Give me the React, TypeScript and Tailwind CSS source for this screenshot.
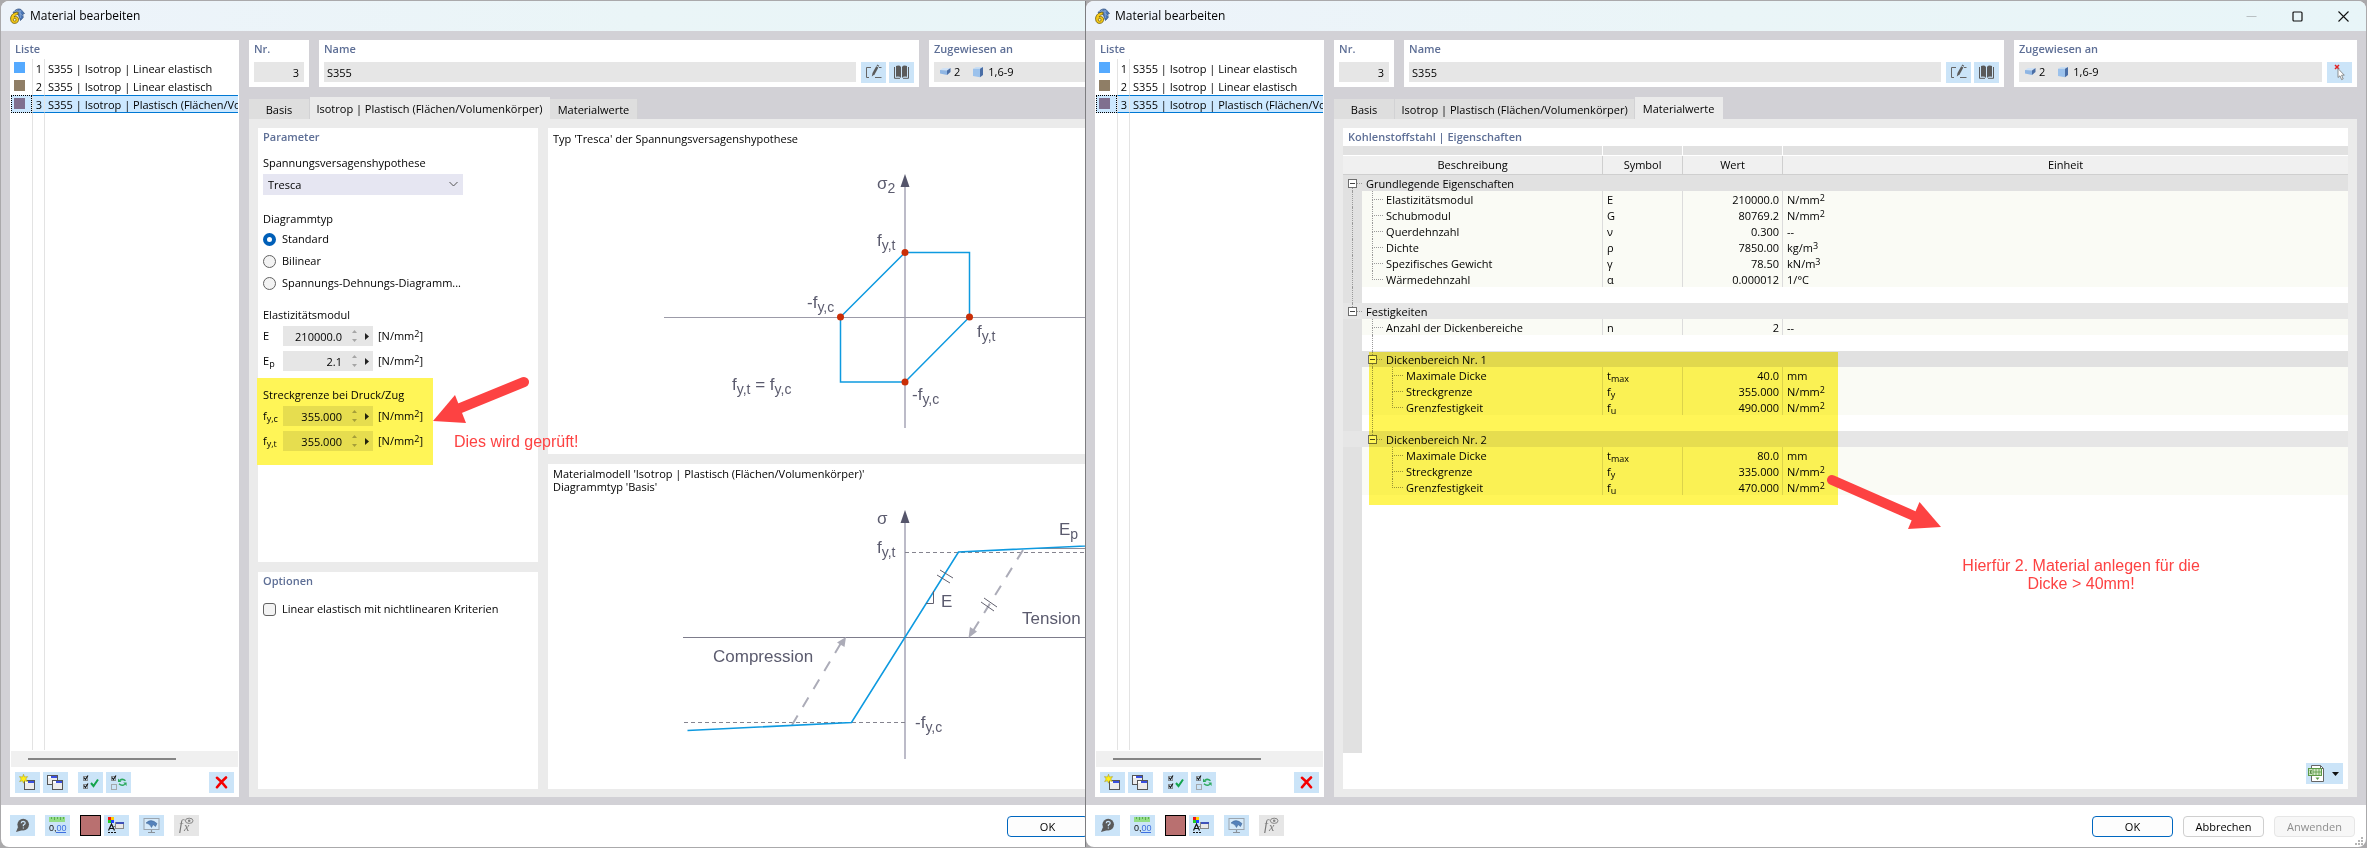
import { useId } from "react";
import type { ReactNode } from "react";

type Tab = "basis" | "model" | "values";

/* ---------- icons ---------- */

function AppIcon() {
  return (
    <svg className="size-4 shrink-0" viewBox="0 0 16 16" aria-hidden="true">
      <path d="M4 4.5Q8 -.5 12 1.5L15.5 5.5L13.8 6L14.2 9.5L11.5 12.5L9 6Z" fill="#4a76b8" stroke="#2f4d7d" strokeWidth=".7" />
      <path d="M5 3.5L12.5 3M7 2L14 8M11 2L11.4 10" stroke="#a9c3e6" strokeWidth=".5" />
      <path d="M7.6 4.2C3.5 5 1.4 8 1.6 11.2C1.8 14.5 4 15.6 5.8 15.4C8.7 15.2 10 13 9.6 10.8C9.2 8.6 6.8 8 5.2 9C5.6 7.6 6.8 6.8 8.8 6.6L9.2 4.2Z" fill="#f6c915" stroke="#6b5a12" strokeWidth=".8" />
      <circle cx="5.7" cy="11.8" r="1.4" fill="#fff3b0" stroke="#6b5a12" strokeWidth=".7" />
    </svg>
  );
}

function EditIcon() {
  return (
    <svg className="h-[17px] w-[19px]" viewBox="0 0 19 17" fill="none" aria-hidden="true">
      <path d="M7 3.5H2.5V13.5H5M11 13.5H17.5M15 3.5H17.5" stroke="#666" />
      <path d="M8.5 9L12.2 2.2L14.4 3.4L10.7 10.2L7.8 12.6Z" fill="#5a5a5a" />
      <path d="M12.6 1.4L13.2 .6L15.2 1.8L14.8 2.7Z" fill="#5a5a5a" />
    </svg>
  );
}

function BookIcon() {
  return (
    <svg className="h-[17px] w-[19px]" viewBox="0 0 19 17" aria-hidden="true">
      <path d="M4 2Q7.5 .8 9 3V14Q7.5 12 4 12.8Z" fill="#5a5a5a" />
      <path d="M15 2Q11.5 .8 10 3V14Q11.5 12 15 12.8Z" fill="#5a5a5a" />
      <path d="M2.5 3V14.3H8M16.5 3V14.3H11" fill="none" stroke="#5a5a5a" />
    </svg>
  );
}

function SurfaceIcon() {
  return (
    <svg className="h-3 w-3" viewBox="0 0 12 12" aria-hidden="true">
      <path d="M1 4L4 2H11.5L8 4.5Z" fill="#d0e2f6" />
      <path d="M1 4L8 4.5V9L1 7.6Z" fill="#8fb6e4" />
      <path d="M8 4.5L11.5 2V6L8 9Z" fill="#4a6ea6" />
    </svg>
  );
}

function SolidIcon() {
  return (
    <svg className="h-3 w-3" viewBox="0 0 12 12" aria-hidden="true">
      <path d="M1 2.8L4 1H11L8 2.8Z" fill="#c8def5" />
      <path d="M1 2.8H8V11.2L1 10Z" fill="#9cc2ec" />
      <path d="M8 2.8L11 1V9L8 11.2Z" fill="#4a6ea6" />
    </svg>
  );
}

function PickIcon() {
  return (
    <svg className="h-[17px] w-[19px]" viewBox="0 0 19 17" aria-hidden="true">
      <path d="M5 1L9 5M9 1L5 5" stroke="#e32222" strokeWidth="1.5" />
      <path d="M8 4.5V13.5L10 11.8L11.6 15.6L13.2 14.9L11.6 11.2H14.3Z" fill="#fff" stroke="#777" strokeWidth=".8" />
    </svg>
  );
}

function WindowShape({ x, y }: { x: number; y: number }) {
  return (
    <g>
      <rect x={x + 0.5} y={y + 0.5} width="10" height="9" fill="#ececec" stroke="#555" />
      <rect x={x + 1} y={y + 1} width="9" height="2" fill="#fff" />
      <rect x={x + 4} y={y + 1} width="6" height="2" fill="#3a50e0" />
    </g>
  );
}

function NewIcon() {
  return (
    <svg className="h-[17px] w-[17px]" viewBox="0 0 17 17" aria-hidden="true">
      <WindowShape x={5} y={6} />
      <path d="M4.5 .2L5.5 3L8.6 2.6L6.8 5L8.4 7.6L5.5 6.8L4.5 9.2L3.6 6.8L.6 7.6L2.2 5L.4 2.6L3.6 3Z" fill="#ffee1a" stroke="#a39612" strokeWidth=".5" />
    </svg>
  );
}

function CopyIcon() {
  return (
    <svg className="h-[17px] w-[17px]" viewBox="0 0 17 17" aria-hidden="true">
      <WindowShape x={0} y={1} />
      <WindowShape x={5} y={6} />
    </svg>
  );
}

function SelectAllIcon() {
  return (
    <svg className="h-[17px] w-[19px]" viewBox="0 0 19 17" fill="none" aria-hidden="true">
      <rect x="2.5" y="2.5" width="4" height="4" stroke="#8a8f94" />
      <rect x="2.5" y="10.5" width="4" height="4" stroke="#8a8f94" />
      <path d="M3 3.5L4.4 5.5L7 1.5M3 11.5L4.4 13.5L7 9.5" stroke="#111" strokeWidth="1.1" />
      <path d="M10 9L12.5 12L17 5.5" stroke="#14a44d" strokeWidth="2" />
    </svg>
  );
}

function InvertIcon() {
  return (
    <svg className="h-[17px] w-[19px]" viewBox="0 0 19 17" fill="none" aria-hidden="true">
      <rect x="2.5" y="2.5" width="4" height="4" stroke="#8a8f94" />
      <rect x="2.5" y="10.5" width="5" height="5" stroke="#a3a8ad" />
      <path d="M3 3.5L4.4 5.5L7 1.5" stroke="#111" strokeWidth="1.1" />
      <path d="M16.5 6.8Q13.5 4.2 10.8 6.4M10 9.8Q13 12.6 15.8 10.2" stroke="#2ba85c" strokeWidth="1.5" />
      <path d="M9 4.6V8H12.4ZM17.6 12V8.6H14.2Z" fill="#2ba85c" />
    </svg>
  );
}

function DeleteIcon() {
  return (
    <svg className="h-[13px] w-[13px]" viewBox="0 0 13 13" aria-hidden="true">
      <path d="M2 1.8Q6 5 11 11.2M11 1.5Q6 6 2 11.2" stroke="#f50000" strokeWidth="2.6" strokeLinecap="round" fill="none" />
    </svg>
  );
}

function HelpIcon() {
  return (
    <svg className="h-[15px] w-[15px]" viewBox="0 0 15 15" aria-hidden="true">
      <circle cx="8.2" cy="6.6" r="5.8" fill="#5a5a5a" />
      <path d="M3 9L1 14L8 12Z" fill="#5a5a5a" />
      <path d="M6.2 5.2Q6.4 3.3 8.3 3.3Q10.2 3.4 10.2 5Q10.1 6.2 8.4 7V8.2M8.4 9.4V10.6" fill="none" stroke="#cbe4f8" strokeWidth="1.3" />
    </svg>
  );
}

function UnitsIcon() {
  return (
    <svg className="h-[17px] w-[19px]" viewBox="0 0 19 17" aria-hidden="true">
      <rect x="1" y="0" width="16" height="5" fill="#93dd86" />
      <path d="M3.5 0V2M6.5 0V3M9.5 0V2M12.5 0V3M15.5 0V2" stroke="#4c9e45" strokeWidth=".8" />
      <text x="1" y="13.5" fontSize="9" fontFamily="Liberation Sans, sans-serif" fill="#111">
        0,<tspan fill="#3d6fe0">00</tspan>
      </text>
      <path d="M8 15.5H18" stroke="#3d6fe0" />
    </svg>
  );
}

function DisplayIcon() {
  return (
    <svg className="h-[17px] w-[19px]" viewBox="0 0 19 17" aria-hidden="true">
      <rect x="1" y="0" width="3" height="3" fill="#e11" />
      <rect x="4" y="0" width="3" height="3" fill="#fc0" />
      <rect x="1" y="3" width="3" height="3" fill="#2c2" />
      <rect x="4" y="3" width="3" height="3" fill="#24f" />
      <path d="M1.5 13.5L4.5 7L7.5 13.5M2.5 11.5H6.5" stroke="#111" strokeWidth="1.2" fill="none" />
      <path d="M1 15.5H3M4 15.5H6M7 15.5H9" stroke="#111" />
      <rect x="8.5" y="5.5" width="8" height="6" fill="#e8e8e8" stroke="#888" />
      <rect x="9" y="5" width="8" height="2" fill="#3f51b8" />
      <path d="M6 9.5H8" stroke="#777" />
    </svg>
  );
}

function ViewIcon() {
  return (
    <svg className="h-[17px] w-[17px]" viewBox="0 0 17 17" aria-hidden="true">
      <rect x="1" y="1.5" width="15" height="11" fill="#d6eafa" stroke="#9aa4ae" />
      <path d="M3 6Q8 1 14 6.5L12.5 9.5L10 7.5L8.5 10.5Q7 6.5 3 6Z" fill="#5582bb" stroke="#3b608f" strokeWidth=".5" />
      <path d="M8.5 13V15M5 15.5H12" stroke="#8a929a" strokeWidth="1.2" />
    </svg>
  );
}

function FormulaIcon() {
  return (
    <svg className="h-[17px] w-[17px]" viewBox="0 0 17 17" aria-hidden="true">
      <text x="1" y="13" fontSize="14" fontStyle="italic" fontFamily="Liberation Serif, serif" fill="#777">
        f<tspan dx="1" dy="1" fontSize="12">x</tspan>
      </text>
      <ellipse cx="11.2" cy="3.8" rx="3.8" ry="2.6" fill="none" stroke="#858585" />
      <circle cx="11.2" cy="3.8" r="1.3" fill="#858585" />
    </svg>
  );
}

function ExportIcon() {
  return (
    <svg className="h-[17px] w-4" viewBox="0 0 16 17" fill="none" aria-hidden="true">
      <path d="M3.5 .5H12.5L15.5 3.5V16.5H3.5Z" fill="#fff" stroke="#666" />
      <path d="M12.5 .5V3.5H15.5" stroke="#666" />
      <rect x=".5" y="3.5" width="13" height="7" fill="#cfe6c4" stroke="#5c9a46" />
      <path d="M5 4V10M8 4V10M11 4V10M5 7H13" stroke="#5c9a46" strokeWidth=".8" />
      <path d="M2 5L3.5 9M3.5 5L2 9" stroke="#3d7a2a" strokeWidth=".8" />
      <path d="M7.5 12.5H11.5L9.5 15Z" fill="#5c9a46" />
    </svg>
  );
}

/* ---------- shared parts ---------- */

function Heading({ children }: { children: ReactNode }) {
  return <h2 className="h-[18px] px-[5px] font-semibold leading-[18px] text-[#5e6f96]">{children}</h2>;
}

function Sub({ children }: { children: ReactNode }) {
  return <sub className="bottom-[-2px] text-[9px]">{children}</sub>;
}

function Sup({ children }: { children: ReactNode }) {
  return <sup className="top-[-3px] text-[9px]">{children}</sup>;
}

function ToolButton({ label, children, muted }: { label: string; children: ReactNode; muted?: boolean }) {
  return (
    <button
      type="button"
      aria-label={label}
      className={`flex h-[21px] w-[25px] shrink-0 items-center justify-center ${muted ? "bg-[#e6e6e6]" : "bg-[#cbe4f8]"}`}
    >
      {children}
    </button>
  );
}

const MATERIALS = [
  { no: 1, name: "S355 | Isotrop | Linear elastisch", color: "bg-[#55aaff]" },
  { no: 2, name: "S355 | Isotrop | Linear elastisch", color: "bg-[#8f7e66]" },
  { no: 3, name: "S355 | Isotrop | Plastisch (Flächen/Volumenkörper)", color: "bg-[#80708f]" },
];

function MaterialList() {
  return (
    <aside className="flex w-[229px] shrink-0 flex-col bg-white p-px pt-0">
      <div className="-ml-px">
        <Heading>Liste</Heading>
      </div>
      <ul className="mt-px">
        {MATERIALS.map((m) => {
          const active = m.no === 3;
          return (
            <li key={m.no}>
              <button
                type="button"
                className={`flex h-[18px] w-full overflow-hidden text-left ${active ? "bg-[#cce8ff]" : ""}`}
              >
                <span className={`h-full w-[21px] shrink-0 ${active ? "border border-dotted border-black pl-[2px] pt-[2px]" : "pl-[3px] pt-[3px]"}`}>
                  <span className={`block size-[11px] ${m.color}`} />
                </span>
                <span className={`h-full w-3 shrink-0 border-l border-[#e3e3e3] pr-[2px] text-right ${active ? "border-y border-y-[#0078d4] leading-[18px]" : "leading-5"}`}>
                  {m.no}
                </span>
                <span className={`h-full min-w-0 flex-1 overflow-hidden whitespace-nowrap border-l border-[#e3e3e3] pl-[3px] ${active ? "border-y border-y-[#0078d4] leading-[18px]" : "leading-5"}`}>
                  {m.name}
                </span>
              </button>
            </li>
          );
        })}
      </ul>
      <div className="flex flex-1 pl-[21px]">
        <div className="w-[13px] border-x border-[#e3e3e3]" />
      </div>
      <div className="mt-px h-4 bg-[#f0f0f0] pl-[17px] pt-[7px]">
        <div className="h-[2px] w-[148px] bg-[#858585]" />
      </div>
      <div className="flex gap-[3px] px-1 pb-[3px] pt-[5px]">
        <ToolButton label="Neu"><NewIcon /></ToolButton>
        <ToolButton label="Kopieren"><CopyIcon /></ToolButton>
        <span className="w-1" />
        <ToolButton label="Alle auswählen"><SelectAllIcon /></ToolButton>
        <ToolButton label="Auswahl umkehren"><InvertIcon /></ToolButton>
        <span className="flex-1" />
        <ToolButton label="Löschen"><DeleteIcon /></ToolButton>
      </div>
    </aside>
  );
}

function HeaderFields() {
  const id = useId();
  return (
    <div className="flex h-[47px] gap-[10px]">
      <section className="w-[60px] bg-white">
        <Heading><label htmlFor={id + "nr"}>Nr.</label></Heading>
        <div className="px-[5px] pt-1">
          <input id={id + "nr"} readOnly value="3" className="block h-5 w-full bg-[#e6e6e6] px-[5px] pt-px text-right outline-none" />
        </div>
      </section>
      <section className="min-w-0 flex-1 bg-white">
        <Heading><label htmlFor={id + "name"}>Name</label></Heading>
        <div className="flex gap-[3px] px-[5px] pt-1">
          <input id={id + "name"} readOnly value="S355" className="mr-[2px] block h-5 min-w-0 flex-1 bg-[#e6e6e6] px-[3px] pt-px outline-none" />
          <ToolButton label="Name bearbeiten"><EditIcon /></ToolButton>
          <ToolButton label="Bibliothek"><BookIcon /></ToolButton>
        </div>
      </section>
      <section className="w-[343px] bg-white">
        <Heading>Zugewiesen an</Heading>
        <div className="flex gap-[5px] px-[5px] pt-1">
          <div className="flex h-5 flex-1 items-center bg-[#e6e6e6] pl-[5px]">
            <SurfaceIcon />
            <span className="ml-[3px] pt-px">2</span>
            <span className="ml-3"><SolidIcon /></span>
            <span className="ml-1 pt-px">1,6-9</span>
          </div>
          <ToolButton label="Zuweisen"><PickIcon /></ToolButton>
        </div>
      </section>
    </div>
  );
}

const TABS: { id: Tab; title: string; width: string }[] = [
  { id: "basis", title: "Basis", width: "w-[61px]" },
  { id: "model", title: "Isotrop | Plastisch (Flächen/Volumenkörper)", width: "w-[240px]" },
  { id: "values", title: "Materialwerte", width: "w-[88px]" },
];

function Dialog({ tab, children }: { tab: Tab; children: ReactNode }) {
  return (
    <section className="flex min-h-full flex-1 flex-col overflow-hidden rounded-lg bg-white">
      <header className="flex h-[30px] items-center bg-gradient-to-r from-[#edf3fa] via-[#eaf5f7] to-[#e8f5f8] pl-2">
        <AppIcon />
        <h1 className="ml-[5px] text-xs">Material bearbeiten</h1>
        <div className="ml-auto flex h-full items-center">
          <button type="button" aria-label="Minimieren" className="flex h-full w-[46px] items-center justify-center">
            <svg className="h-[11px] w-[11px]" viewBox="0 0 11 11"><path d="M.5 5.5H10.5" stroke="#b9c0c3" /></svg>
          </button>
          <button type="button" aria-label="Maximieren" className="flex h-full w-[46px] items-center justify-center">
            <svg className="h-[11px] w-[11px]" viewBox="0 0 11 11"><rect x="1" y="1" width="9" height="9" rx="1" fill="none" stroke="#111" strokeWidth="1.2" /></svg>
          </button>
          <button type="button" aria-label="Schließen" className="flex h-full w-[46px] items-center justify-center">
            <svg className="h-[11px] w-[11px]" viewBox="0 0 11 11"><path d="M.5 .5L10.5 10.5M10.5 .5L.5 10.5" stroke="#111" strokeWidth="1.1" /></svg>
          </button>
        </div>
      </header>

      <main className="flex flex-1 gap-[10px] bg-[#d2d1d6] px-[9px] pb-2 pt-[9px]">
        <MaterialList />
        <div className="flex min-w-0 flex-1 flex-col">
          <HeaderFields />
          <div role="tablist" className="flex h-8 items-end">
            {TABS.map((t) => (
              <button
                key={t.id}
                type="button"
                role="tab"
                aria-selected={t.id === tab}
                className={`${t.width} whitespace-nowrap border-r pt-[2px] text-center ${
                  t.id === tab ? "h-[22px] border-[#ebebeb] bg-[#ebebeb]" : "h-5 border-[#d2d2d4] bg-[#dedede]"
                }`}
              >
                {t.title}
              </button>
            ))}
          </div>
          <div className="flex flex-1 bg-[#ebebeb] px-[9px] pb-2 pt-[9px]">{children}</div>
        </div>
      </main>

      <footer className="flex h-[42px] items-start pl-[9px] pr-[10px] pt-[10px]">
        <ToolButton label="Hilfe"><HelpIcon /></ToolButton>
        <span className="w-[10px]" />
        <ToolButton label="Einheiten"><UnitsIcon /></ToolButton>
        <span className="w-[10px]" />
        <button type="button" aria-label="Farbe" className="mr-[3px] h-[21px] w-[21px] border border-black bg-[#b97070]" />
        <ToolButton label="Darstellung"><DisplayIcon /></ToolButton>
        <span className="w-[10px]" />
        <ToolButton label="Ansicht"><ViewIcon /></ToolButton>
        <span className="w-[10px]" />
        <ToolButton label="Formel" muted><FormulaIcon /></ToolButton>
        <div className="ml-auto flex gap-[10px] pt-px">
          <button type="button" className="h-[21px] w-[81px] rounded border border-[#0067c0] bg-[#fdfdfd] pt-px">OK</button>
          <button type="button" className="h-[21px] w-[81px] rounded border border-[#cfcfcf] bg-[#fdfdfd] pt-px">Abbrechen</button>
          <button type="button" disabled className="h-[21px] w-[81px] rounded border border-[#e6e6e6] bg-[#f7f7f7] pt-px text-[#8e8e8e]">Anwenden</button>
        </div>
        <svg className="-mr-[7px] mt-[22px] h-2 w-2 self-start" viewBox="0 0 8 8" fill="#b5b5b5" aria-hidden="true">
          <path d="M6 0H8V2H6ZM3 3H5V5H3ZM6 3H8V5H6ZM0 6H2V8H0ZM3 6H5V8H3ZM6 6H8V8H6Z" />
        </svg>
      </footer>
    </section>
  );
}

/* ---------- material model tab ---------- */

function QuantityField({ symbol, sub, value }: { symbol: string; sub?: string; value: string }) {
  const id = useId();
  return (
    <div className="flex h-5 items-center">
      <label htmlFor={id} className="w-5 shrink-0 leading-5">
        {symbol}
        {sub && <Sub>{sub}</Sub>}
      </label>
      <div className="flex h-full w-[90px] items-center bg-[#e6e6e6]">
        <input id={id} defaultValue={value} className="h-full w-[60px] bg-transparent pr-px pt-px text-right outline-none" />
        <svg className="h-5 w-[30px]" viewBox="0 0 30 20" aria-hidden="true">
          <path d="M9 7L11.5 4L14 7ZM9 13L11.5 16L14 13Z" fill="#a5a5a5" />
          <path d="M22 7L26 10.5L22 14Z" fill="#222" />
        </svg>
      </div>
      <span className="ml-[5px] leading-5">
        [N/mm<Sup>2</Sup>]
      </span>
    </div>
  );
}

function Parameters() {
  const id = useId();
  const types = ["Standard", "Bilinear", "Spannungs-Dehnungs-Diagramm..."];
  return (
    <section className="relative z-10 flex-1 bg-white">
      <Heading>Parameter</Heading>
      <div className="px-[5px] pt-[9px]">
        <label htmlFor={id + "hyp"} className="block h-4 leading-4">Spannungsversagenshypothese</label>
        <div className="relative mt-[3px] w-[200px]">
          <select id={id + "hyp"} className="block h-[21px] w-full appearance-none bg-[#e6e6f2] pl-[5px] pt-px outline-none">
            <option>Tresca</option>
          </select>
          <svg className="pointer-events-none absolute right-[5px] top-[7px] h-[7px] w-[9px]" viewBox="0 0 9 7">
            <path d="M.5 1L4.5 5L8.5 1" fill="none" stroke="#555" />
          </svg>
        </div>

        <fieldset className="mt-4">
          <legend className="h-4 leading-4">Diagrammtyp</legend>
          <div className="pt-px">
            {types.map((t, i) => (
              <label key={t} className="flex h-[22px] items-center gap-[6px]">
                <input
                  type="radio"
                  name={id + "type"}
                  defaultChecked={i === 0}
                  className="size-[13px] appearance-none rounded-full border border-[#626262] bg-[#f3f3f3] checked:border-4 checked:border-[#005fb8] checked:bg-white"
                />
                {t}
              </label>
            ))}
          </div>
        </fieldset>

        <h3 className="mt-[13px] h-4 leading-4">Elastizitätsmodul</h3>
        <div className="mt-[3px] flex flex-col gap-[5px]">
          <QuantityField symbol="E" value="210000.0" />
          <QuantityField symbol="E" sub="p" value="2.1" />
        </div>

        <div className="relative mt-4">
          <h3 className="h-4 leading-4">Streckgrenze bei Druck/Zug</h3>
          <div className="mt-[3px] flex flex-col gap-[5px]">
            <QuantityField symbol="f" sub="y,c" value="355.000" />
            <QuantityField symbol="f" sub="y,t" value="355.000" />
          </div>
          <div className="pointer-events-none absolute -bottom-[14px] -left-[6px] -top-[9px] w-[176px] bg-[#fff557] mix-blend-multiply" />
          <svg className="pointer-events-none absolute -top-3 left-[170px] h-[50px] w-[97px]" viewBox="433 375 97 50" aria-hidden="true">
            <path d="M524 382L458 409" stroke="#fd4242" strokeWidth="10" strokeLinecap="round" />
            <path d="M433 421L455 395L466 423Z" fill="#fd4242" />
          </svg>
          <p className="pointer-events-none absolute left-[191px] top-[46px] whitespace-nowrap font-['Liberation_Sans',sans-serif] text-base leading-[18px] text-[#fd4242]">
            Dies wird geprüft!
          </p>
        </div>
      </div>
    </section>
  );
}

function Label({ x, y, t, sub }: { x: number; y: number; t: string; sub?: string }) {
  return (
    <text x={x} y={y} fontSize="17" fill="#5b5b6e" fontFamily="Liberation Sans, Arial, sans-serif">
      {t}
      {sub && <tspan dy="4" fontSize="14">{sub}</tspan>}
    </text>
  );
}

function TrescaDiagram() {
  const points: [number, number][] = [[905, 252.5], [969.5, 317], [905, 382], [840.5, 317]];
  return (
    <svg className="mx-auto block h-[280px] w-[483px]" viewBox="664 155 483 280" role="img" aria-label="Tresca-Fließfläche">
      <path d="M905 185V428" stroke="#bcbbc8" strokeWidth="2" />
      <path d="M664 317.5H1147" stroke="#9c9ba8" />
      <path d="M905 174L909.5 187H900.5Z" fill="#55556b" />
      <path d="M905 252.5H969.5V317L905 382H840.5V317Z" fill="none" stroke="#0e9ae0" strokeWidth="1.5" />
      {points.map(([x, y]) => <circle key={`${x}-${y}`} cx={x} cy={y} r="3.5" fill="#cb2e06" />)}
      <Label x={877} y={189} t="σ" sub="2" />
      <Label x={877} y={246} t="f" sub="y,t" />
      <Label x={807} y={308} t="-f" sub="y,c" />
      <Label x={977} y={337} t="f" sub="y,t" />
      <Label x={912} y={400} t="-f" sub="y,c" />
      <text x="732" y="390" fontSize="17" fill="#5b5b6e" fontFamily="Liberation Sans, Arial, sans-serif">
        f<tspan dy="4" fontSize="14">y,t</tspan>
        <tspan dy="-4"> = f</tspan>
        <tspan dy="4" fontSize="14">y,c</tspan>
      </text>
    </svg>
  );
}

function StressStrainDiagram() {
  return (
    <svg className="mx-auto block h-[270px] w-[483px]" viewBox="664 500 483 270" role="img" aria-label="Spannungs-Dehnungs-Diagramm">
      <path d="M905 520V759" stroke="#bcbbc8" strokeWidth="2" />
      <path d="M683 637.5H1127" stroke="#7d7c8b" />
      <path d="M905 510L909.5 523H900.5Z" fill="#55556b" />
      <path d="M905 552.5H1127M905 722.5H683" stroke="#85848f" strokeDasharray="4 3" />
      <path d="M1030 548.5H1127" stroke="#8d8c99" />
      <path d="M792 725L841 643M1023 550L973 631" stroke="#acacb8" strokeWidth="2" strokeDasharray="11 10" />
      <path d="M846 637L844.5 647L837 642.5ZM968.5 638L970 627L977 631.5Z" fill="#acacb8" />
      <path d="M687.5 730.5L851.5 722.5L958.5 552L1127 544" fill="none" stroke="#0e9ae0" strokeWidth="1.6" />
      <path d="M926 603.5H933.5V591M937 575L950 583M940 570L953 578M981 602L994 611M984 598L997 607" fill="none" stroke="#62616f" />
      <Label x={877} y={524} t="σ" />
      <Label x={877} y={553} t="f" sub="y,t" />
      <Label x={1059} y={535} t="E" sub="p" />
      <Label x={941} y={607} t="E" />
      <Label x={1022} y={624} t="Tension" />
      <Label x={713} y={662} t="Compression" />
      <Label x={915} y={728} t="-f" sub="y,c" />
    </svg>
  );
}

function ModelTab() {
  return (
    <div className="flex flex-1 gap-[10px]">
      <div className="flex w-[280px] shrink-0 flex-col gap-[10px]">
        <Parameters />
        <section className="h-[217px] bg-white">
          <Heading>Optionen</Heading>
          <label className="mt-[11px] flex h-4 items-center gap-[6px] px-[5px]">
            <input type="checkbox" className="size-[13px] appearance-none rounded-[3px] border border-[#626262] bg-[#f3f3f3]" />
            Linear elastisch mit nichtlinearen Kriterien
          </label>
        </section>
      </div>
      <div className="flex min-w-0 flex-1 flex-col gap-[10px]">
        <section className="flex-1 bg-white">
          <h3 className="h-[27px] px-[5px] pt-[3px] leading-[15px]">Typ 'Tresca' der Spannungsversagenshypothese</h3>
          <TrescaDiagram />
        </section>
        <section className="flex-1 bg-white">
          <h3 className="h-9 px-[5px] pt-[3px] leading-[13px]">
            Materialmodell 'Isotrop | Plastisch (Flächen/Volumenkörper)'
            <br />
            Diagrammtyp 'Basis'
          </h3>
          <StressStrainDiagram />
        </section>
      </div>
    </div>
  );
}

/* ---------- material values tab ---------- */

type Row =
  | { kind: "group"; level: 0 | 1; title: string; shade: string; joinAbove?: boolean; joinBelow?: boolean }
  | { kind: "item"; level: 0 | 1; title: string; sym: string; sub?: string; value: string; unit: string; exp?: string; last?: boolean; root?: boolean; branch?: boolean }
  | { kind: "blank"; root?: boolean; branch?: boolean };

const ROWS: Row[] = [
  { kind: "group", level: 0, title: "Grundlegende Eigenschaften", shade: "bg-[#e1e1e1]", joinBelow: true },
  { kind: "item", level: 0, title: "Elastizitätsmodul", sym: "E", value: "210000.0", unit: "N/mm", exp: "2", root: true },
  { kind: "item", level: 0, title: "Schubmodul", sym: "G", value: "80769.2", unit: "N/mm", exp: "2", root: true },
  { kind: "item", level: 0, title: "Querdehnzahl", sym: "ν", value: "0.300", unit: "--", root: true },
  { kind: "item", level: 0, title: "Dichte", sym: "ρ", value: "7850.00", unit: "kg/m", exp: "3", root: true },
  { kind: "item", level: 0, title: "Spezifisches Gewicht", sym: "γ", value: "78.50", unit: "kN/m", exp: "3", root: true },
  { kind: "item", level: 0, title: "Wärmedehnzahl", sym: "α", value: "0.000012", unit: "1/°C", root: true, last: true },
  { kind: "blank", root: true },
  { kind: "group", level: 0, title: "Festigkeiten", shade: "bg-[#e6e6e6]", joinAbove: true },
  { kind: "item", level: 0, title: "Anzahl der Dickenbereiche", sym: "n", value: "2", unit: "--" },
  { kind: "blank", branch: true },
  { kind: "group", level: 1, title: "Dickenbereich Nr. 1", shade: "bg-[#e1e1e1]", joinAbove: true, joinBelow: true },
  { kind: "item", level: 1, title: "Maximale Dicke", sym: "t", sub: "max", value: "40.0", unit: "mm", branch: true },
  { kind: "item", level: 1, title: "Streckgrenze", sym: "f", sub: "y", value: "355.000", unit: "N/mm", exp: "2", branch: true },
  { kind: "item", level: 1, title: "Grenzfestigkeit", sym: "f", sub: "u", value: "490.000", unit: "N/mm", exp: "2", branch: true, last: true },
  { kind: "blank", branch: true },
  { kind: "group", level: 1, title: "Dickenbereich Nr. 2", shade: "bg-[#e6e6e6]", joinAbove: true },
  { kind: "item", level: 1, title: "Maximale Dicke", sym: "t", sub: "max", value: "80.0", unit: "mm" },
  { kind: "item", level: 1, title: "Streckgrenze", sym: "f", sub: "y", value: "335.000", unit: "N/mm", exp: "2" },
  { kind: "item", level: 1, title: "Grenzfestigkeit", sym: "f", sub: "u", value: "470.000", unit: "N/mm", exp: "2", last: true },
];

function Stem({ show, width }: { show?: boolean; width: string }) {
  return <span className={`h-4 shrink-0 ${width} ${show ? "border-l border-dotted border-[#9a9a9a]" : ""}`} />;
}

function Expander({ above, below }: { above?: boolean; below?: boolean }) {
  const line = "border-l border-dotted border-[#9a9a9a]";
  return (
    <span className="flex h-4 w-[9px] shrink-0 flex-col items-center">
      <span className={`h-1 w-px ${above ? line : ""}`} />
      <button type="button" aria-label="Zuklappen" className="flex size-[9px] shrink-0 items-center justify-center border border-[#6e6e6e] bg-white">
        <span className="h-px w-[5px] bg-[#444]" />
      </button>
      <span className={`h-[3px] w-px ${below ? line : ""}`} />
    </span>
  );
}

function TreeRow({ row }: { row: Row }) {
  if (row.kind === "group") {
    return (
      <tr className={`h-4 ${row.shade}`}>
        <td className="p-0">
          {row.level === 0 && (
            <div className="flex h-4 items-center pl-[5px]">
              <Expander above={row.joinAbove} below={row.joinBelow} />
              <span className="h-px flex-1 border-t border-dotted border-[#9a9a9a]" />
            </div>
          )}
        </td>
        <td colSpan={4} className="p-0">
          {row.level === 0 ? (
            <div className="h-4 pl-1 leading-[18px]">{row.title}</div>
          ) : (
            <div className="flex h-4 items-center pl-[6px] leading-[18px]">
              <Expander above={row.joinAbove} below={row.joinBelow} />
              <span className="mr-1 h-px w-[5px] border-t border-dotted border-[#9a9a9a]" />
              <span className="h-4">{row.title}</span>
            </div>
          )}
        </td>
      </tr>
    );
  }
  const gutter = (
    <td className="bg-[#e1e1e1] p-0">
      <div className="flex h-4 pl-[9px]"><Stem show={row.root} width="w-px" /></div>
    </td>
  );
  if (row.kind === "blank") {
    return (
      <tr className="h-4">
        {gutter}
        <td colSpan={4} className="bg-white p-0">
          <div className="flex h-4 pl-[10px]"><Stem show={row.branch} width="w-px" /></div>
        </td>
      </tr>
    );
  }
  return (
    <tr className="h-4 bg-[#fafbf5] leading-[18px]">
      {gutter}
      <td className="p-0">
        <div className="flex h-4 pl-[10px]">
          {row.level === 1 && <Stem show={row.branch} width="w-5" />}
          <span className="mr-[3px] flex h-4 w-[11px] flex-col">
            <span className="h-[9px] border-b border-l border-dotted border-[#9a9a9a]" />
            <span className={`h-[7px] ${row.last ? "" : "border-l border-dotted border-[#9a9a9a]"}`} />
          </span>
          {row.title}
        </div>
      </td>
      <td className="border-l border-[#dcdcdc] p-0 pl-1">
        <div className="h-4">{row.sym}{row.sub && <Sub>{row.sub}</Sub>}</div>
      </td>
      <td className="border-l border-[#dcdcdc] p-0 pr-[3px] text-right"><div className="h-4">{row.value}</div></td>
      <td className="border-l border-[#dcdcdc] p-0 pl-1">
        <div className="h-4">{row.unit}{row.exp && <Sup>{row.exp}</Sup>}</div>
      </td>
    </tr>
  );
}

function ValuesTab() {
  const head = "h-[19px] border-b border-[#cfcfcf] p-0 pt-px text-center font-normal";
  return (
    <section className="relative flex min-w-0 flex-1 flex-col bg-white">
      <Heading>Kohlenstoffstahl | Eigenschaften</Heading>
      <table className="w-full table-fixed border-separate border-spacing-0">
        <colgroup>
          <col className="w-[19px]" />
          <col className="w-[240px]" />
          <col className="w-[80px]" />
          <col className="w-[100px]" />
          <col />
        </colgroup>
        <thead>
          <tr className="h-[10px] bg-[#e1e1e1]">
            <td colSpan={2} className="border-b border-white p-0" />
            <td className="border-b border-l border-white p-0" />
            <td className="border-b border-l border-white p-0" />
            <td className="border-b border-l border-white p-0" />
          </tr>
          <tr className="bg-[#f0f0f0]">
            <th scope="col" colSpan={2} className={head}>Beschreibung</th>
            <th scope="col" className={`${head} border-l`}>Symbol</th>
            <th scope="col" className={`${head} border-l`}>Wert</th>
            <th scope="col" className={`${head} border-l`}>Einheit</th>
          </tr>
        </thead>
        <tbody>
          {ROWS.map((row, i) => <TreeRow key={i} row={row} />)}
        </tbody>
      </table>
      <div className="w-[19px] flex-1 bg-[#e1e1e1]" />
      <div className="flex h-9 items-end justify-end p-[5px]">
        <button type="button" aria-label="Exportieren" className="flex h-[21px] w-[37px] items-center gap-2 bg-[#cbe4f8] pl-[2px]">
          <ExportIcon />
          <svg className="h-1 w-[7px]" viewBox="0 0 7 4"><path d="M0 0H7L3.5 4Z" fill="#111" /></svg>
        </button>
      </div>

      <div className="pointer-events-none absolute left-[26px] top-[224px] h-[153px] w-[469px] bg-[#fff557] mix-blend-multiply" />
      <svg className="pointer-events-none absolute left-[483px] top-[344px] h-[60px] w-[116px]" viewBox="1826 472 116 60" aria-hidden="true">
        <path d="M1832 480L1914 516" stroke="#fd4242" strokeWidth="10" strokeLinecap="round" />
        <path d="M1941 527L1919.5 502L1908 529Z" fill="#fd4242" />
      </svg>
      <p className="pointer-events-none absolute left-[603px] top-[429px] w-[270px] text-center font-['Liberation_Sans',sans-serif] text-base leading-[18px] text-[#fd4242]">
        Hierfür 2. Material anlegen für die
        <br />
        Dicke &gt; 40mm!
      </p>
    </section>
  );
}

export default function App() {
  return (
    <div className="flex min-h-screen bg-[#aaa9ab] py-px pr-px font-['Open_Sans','Noto_Sans',sans-serif] text-[11px] text-black">
      <div className="flex min-w-0 flex-[1085] overflow-hidden pl-px">
        <div className="flex min-w-[1280px]">
          <Dialog tab="model">
            <ModelTab />
          </Dialog>
        </div>
      </div>
      <div className="flex min-w-0 flex-[1281] border-l border-[#7d7d80]">
        <Dialog tab="values">
          <ValuesTab />
        </Dialog>
      </div>
    </div>
  );
}
